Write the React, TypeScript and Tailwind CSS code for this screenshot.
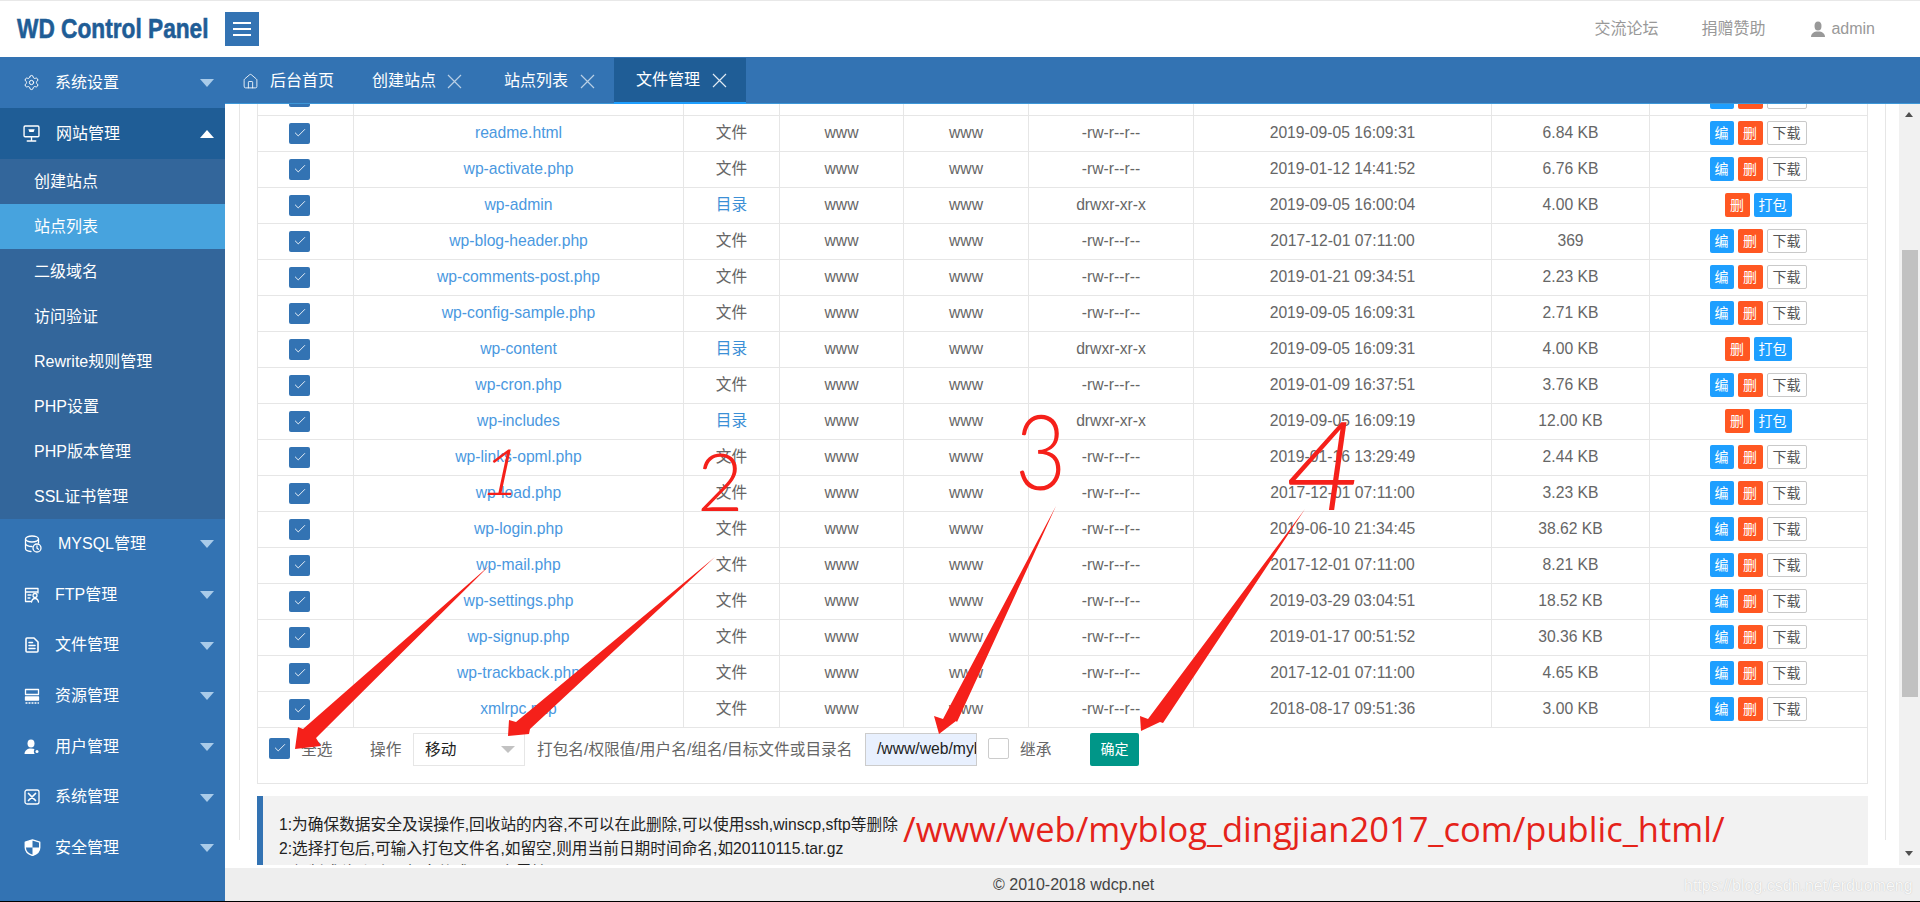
import type { ReactNode } from "react";
import { Settings, Home, Check } from "lucide-react";

const FILES: [string, "f" | "d", string, string, string][] = [
    ["readme.html", "f", "-rw-r--r--", "2019-09-05 16:09:31", "6.84 KB"],
    ["wp-activate.php", "f", "-rw-r--r--", "2019-01-12 14:41:52", "6.76 KB"],
    ["wp-admin", "d", "drwxr-xr-x", "2019-09-05 16:00:04", "4.00 KB"],
    ["wp-blog-header.php", "f", "-rw-r--r--", "2017-12-01 07:11:00", "369"],
    ["wp-comments-post.php", "f", "-rw-r--r--", "2019-01-21 09:34:51", "2.23 KB"],
    ["wp-config-sample.php", "f", "-rw-r--r--", "2019-09-05 16:09:31", "2.71 KB"],
    ["wp-content", "d", "drwxr-xr-x", "2019-09-05 16:09:31", "4.00 KB"],
    ["wp-cron.php", "f", "-rw-r--r--", "2019-01-09 16:37:51", "3.76 KB"],
    ["wp-includes", "d", "drwxr-xr-x", "2019-09-05 16:09:19", "12.00 KB"],
    ["wp-links-opml.php", "f", "-rw-r--r--", "2019-01-16 13:29:49", "2.44 KB"],
    ["wp-load.php", "f", "-rw-r--r--", "2017-12-01 07:11:00", "3.23 KB"],
    ["wp-login.php", "f", "-rw-r--r--", "2019-06-10 21:34:45", "38.62 KB"],
    ["wp-mail.php", "f", "-rw-r--r--", "2017-12-01 07:11:00", "8.21 KB"],
    ["wp-settings.php", "f", "-rw-r--r--", "2019-03-29 03:04:51", "18.52 KB"],
    ["wp-signup.php", "f", "-rw-r--r--", "2019-01-17 00:51:52", "30.36 KB"],
    ["wp-trackback.php", "f", "-rw-r--r--", "2017-12-01 07:11:00", "4.65 KB"],
    ["xmlrpc.php", "f", "-rw-r--r--", "2018-08-17 09:51:36", "3.00 KB"],
];

const SUB_MENU = ["创建站点", "站点列表", "二级域名", "访问验证", "Rewrite规则管理", "PHP设置", "PHP版本管理", "SSL证书管理"];

// Sidebar glyphs, 16 box, white strokes
function Glyph({ children, size = 16, box = "0 0 16 16" }: { children: ReactNode; size?: number; box?: string }) {
    return (
        <svg width={size} height={size} viewBox={box} fill="none" stroke="currentColor" strokeWidth="1.3" strokeLinecap="round" strokeLinejoin="round" className="shrink-0">
            {children}
        </svg>
    );
}

const IconMonitor = (
    <Glyph size={17}>
        <rect x="1" y="1" width="14" height="10" rx="1" />
        <path d="M5 4h6l-1 2.500H6z" fill="currentColor" stroke="none" />
        <path d="M8 11v3M4 15h8" />
    </Glyph>
);

const IconDatabase = (
    <Glyph size={18} box="0 0 18 18">
        <ellipse cx="8" cy="4" rx="6.500" ry="3" />
        <path d="M1.500 4v9.500c0 1.600 2.500 2.800 5.500 3M14.500 4v4M1.500 8.500c0 1.600 3 3 6.500 3" />
        <circle cx="13" cy="13" r="4" />
        <path d="M13 11v2.200l1.500 1" />
    </Glyph>
);

const IconFtp = (
    <Glyph>
        <path d="M14 6V1.500H1.500v13H6.500M1.500 5h12.500M4 8h3M4 11h2" />
        <circle cx="11" cy="8.500" r="2" />
        <path d="M7.500 15c.5-2.500 2-3.500 3.500-3.500s3 1 3.500 3.500" />
    </Glyph>
);

const IconFile = (
    <Glyph>
        <path d="M3 1h7l4 4v9a1 1 0 0 1-1 1H3a1 1 0 0 1-1-1V2a1 1 0 0 1 1-1z" strokeWidth="1.600" />
        <path d="M5 5.500h3.500M5 8.500h6M5 11.500h6" strokeWidth="1.500" />
    </Glyph>
);

const IconServer = (
    <Glyph>
        <rect x="1.500" y="1.500" width="13" height="5" />
        <rect x="1.500" y="9" width="13" height="3" fill="currentColor" />
        <path d="M2 15h1M5 15h1M8 15h1M11 15h1M14 15h.5" />
    </Glyph>
);

const IconUser = (
    <Glyph>
        <ellipse cx="7" cy="4.500" rx="3.500" ry="4" fill="currentColor" stroke="none" />
        <path d="M.5 15c0-3.500 3-5.500 6.500-5.500s5 1 5 2.500v3z" fill="currentColor" stroke="none" />
        <circle cx="13" cy="12.500" r="2.500" fill="#3373b3" stroke="#3373b3" />
        <circle cx="13" cy="12.500" r="1.500" fill="currentColor" stroke="none" />
    </Glyph>
);

const IconTools = (
    <Glyph>
        <rect x="1" y="1" width="14" height="14" rx="2" />
        <path d="M4.500 4.500l7 7M11.500 4.500l-7 7" strokeWidth="1.700" />
    </Glyph>
);

const IconShield = (
    <Glyph size={17}>
        <path d="M8 .8L14.800 3v5c0 3.800-2.800 6.200-6.800 7.500C4 14.200 1.200 11.800 1.200 8V3z" />
        <path d="M8 .8L1.200 3v5H8zM8 8h6.800c0 3.800-2.800 6.200-6.800 7.500z" fill="currentColor" stroke="none" />
    </Glyph>
);

const LOWER_MENU = [
    { label: "MYSQL管理", icon: IconDatabase, labelClass: "ml-[16px]" },
    { label: "FTP管理", icon: IconFtp, labelClass: "ml-[15px]" },
    { label: "文件管理", icon: IconFile, labelClass: "ml-[15px]" },
    { label: "资源管理", icon: IconServer, labelClass: "ml-[15px]" },
    { label: "用户管理", icon: IconUser, labelClass: "ml-[15px]" },
    { label: "系统管理", icon: IconTools, labelClass: "ml-[15px]" },
    { label: "安全管理", icon: IconShield, labelClass: "ml-[14px]" },
];

function Caret({ up }: { up?: boolean }) {
    return (
        <svg width="14" height="8" viewBox="0 0 14 8" className="absolute left-[200px] top-1/2 -translate-y-1/2">
            <path d={up ? "M7 0L14 8H0Z" : "M0 0H14L7 8Z"} fill={up ? "#ffffff" : "#a9cbe9"} />
        </svg>
    );
}

function TabX({ light }: { light?: boolean }) {
    return (
        <svg width="15" height="15" viewBox="0 0 15 15" stroke={light ? "#dfe9f3" : "#b9cfe5"} strokeWidth="1.200" className="shrink-0">
            <path d="M1 1l13 13M14 1L1 14" />
        </svg>
    );
}

function Box({ checked }: { checked?: boolean }) {
    return checked ? (
        <span className="flex h-[21px] w-[21px] items-center justify-center rounded-[2px] bg-[#3373b3]">
            <Check size={14} strokeWidth={1.5} className="text-white" />
        </span>
    ) : (
        <span className="block h-[21px] w-[21px] rounded-[2px] border border-[#cccccc] bg-white" />
    );
}

function Btn({ kind, children }: { kind: "blue" | "red" | "plain"; children: string }) {
    const tone =
        kind === "blue"
            ? "bg-[#1e9fff] text-white"
            : kind === "red"
              ? "min-w-[25px] bg-[#ff5722] text-white"
              : "border border-[#c9c9c9] bg-white text-[#555555]";
    return <span className={"inline-flex h-[24px] items-center justify-center rounded-[2px] px-[5px] text-[14px] " + tone}>{children}</span>;
}

function FileActions({ type }: { type: "f" | "d" }) {
    return (
        <div className="flex items-center justify-center gap-[4px] pr-[1px]">
            {type === "f" ? (
                <>
                    <Btn kind="blue">编</Btn>
                    <Btn kind="red">删</Btn>
                    <Btn kind="plain">下载</Btn>
                </>
            ) : (
                <>
                    <Btn kind="red">删</Btn>
                    <Btn kind="blue">打包</Btn>
                </>
            )}
        </div>
    );
}

function FileRow({ name, type, perm, date, size }: { name: string; type: "f" | "d"; perm: string; date: string; size: string }) {
    return (
        <tr className="h-[36px] border-b border-[#e6e6e6] text-center text-[#666666]">
            <td className="w-[96px] border-l border-[#e6e6e6]">
                <span className="ml-[31px] block w-[21px]">
                    <Box checked />
                </span>
            </td>
            <td className="w-[330px] border-l border-[#e6e6e6] text-[#4a98e0]">{name}</td>
            <td className={"w-[96px] border-l border-[#e6e6e6] " + (type === "d" ? "text-[#3b8fd6]" : "")}>{type === "d" ? "目录" : "文件"}</td>
            <td className="w-[124px] border-l border-[#e6e6e6]">www</td>
            <td className="w-[125px] border-l border-[#e6e6e6]">www</td>
            <td className="w-[165px] border-l border-[#e6e6e6]">{perm}</td>
            <td className="w-[298px] border-l border-[#e6e6e6]">{date}</td>
            <td className="w-[158px] border-l border-[#e6e6e6]">{size}</td>
            <td className="border-x border-[#e6e6e6]">
                <FileActions type={type} />
            </td>
        </tr>
    );
}

export default function App() {
    return (
        <div className="relative flex h-[902px] flex-col overflow-hidden border-y border-t-[#e8e8e8] border-b-black bg-white font-['Liberation_Sans','Noto_Sans_CJK_SC',sans-serif] text-[16px]">
            {/* Top bar */}
            <header className="flex h-[56px] shrink-0 items-center bg-white">
                <div className="w-[225px] pl-[17px]">
                    <span className="inline-block origin-left scale-x-[0.81] whitespace-nowrap text-[28px] font-bold text-[#1f5d96] [-webkit-text-stroke:0.6px_#1f5d96]">
                        WD Control Panel
                    </span>
                </div>
                <button className="flex h-[34px] w-[34px] flex-col items-center justify-center gap-[4px] bg-[#3373b3]">
                    <span className="h-[2px] w-[18px] bg-white" />
                    <span className="h-[2px] w-[18px] bg-white" />
                    <span className="h-[2px] w-[18px] bg-white" />
                </button>
                <nav className="ml-auto flex items-center pr-[45px] text-[#999999]">
                    <span>交流论坛</span>
                    <span className="ml-[43px]">捐赠赞助</span>
                    <svg width="16" height="17" viewBox="0 0 16 17" fill="#999999" className="ml-[45px]">
                        <ellipse cx="8" cy="5" rx="3.500" ry="4.500" />
                        <path d="M1 16c0-3.500 3-5 5-5.500h4c2 .5 5 2 5 5.500z" />
                    </svg>
                    <span className="ml-[5px]">admin</span>
                </nav>
            </header>

            <div className="flex min-h-0 flex-1">
                {/* Sidebar */}
                <aside className="w-[225px] shrink-0 bg-[#3373b3]">
                    <div className="relative flex h-[51px] items-center pl-[23px] text-white">
                        <Settings size={17} strokeWidth={1.4} className="shrink-0" />
                        <span className="ml-[15px]">系统设置</span>
                        <Caret />
                    </div>
                    <div className="relative flex h-[51px] items-center bg-[#1f5d96] pl-[23px] text-white">
                        {IconMonitor}
                        <span className="ml-[16px]">网站管理</span>
                        <Caret up />
                    </div>
                    {SUB_MENU.map((item) => (
                        <div
                            key={item}
                            className={"flex h-[45px] items-center pl-[34px] text-white " + (item === "站点列表" ? "bg-[#47a3de]" : "bg-[#33669b]")}
                        >
                            {item}
                        </div>
                    ))}
                    {LOWER_MENU.map((item) => (
                        <div key={item.label} className="relative flex h-[50.7px] items-center pb-[1px] pl-[24px] text-white">
                            {item.icon}
                            <span className={item.labelClass}>{item.label}</span>
                            <Caret />
                        </div>
                    ))}
                </aside>

                <main className="flex min-w-0 flex-1 flex-col">
                    {/* Tabs */}
                    <div className="flex h-[47px] shrink-0 items-stretch border-b border-[#3d97d8] bg-[#3373b3] pt-[2px] text-white">
                        <div className="flex items-center pl-[17px] pr-[38px]">
                            <Home size={17} strokeWidth={1.2} />
                            <span className="ml-[11px]">后台首页</span>
                        </div>
                        <div className="flex items-center gap-[11px] pr-[42px]">
                            <span>创建站点</span>
                            <TabX />
                        </div>
                        <div className="flex items-center gap-[12px] pr-[19px]">
                            <span>站点列表</span>
                            <TabX />
                        </div>
                        <div className="mb-[-1px] mt-[-1px] flex w-[132px] items-center gap-[12px] border-b-2 border-[#1e9fff] bg-[#1f5d96] pl-[22px]">
                            <span>文件管理</span>
                            <TabX light />
                        </div>
                    </div>

                    <div className="flex min-h-0 flex-1">
                        <div className="min-w-0 flex-1 overflow-hidden pl-[14px] pr-[13px] text-[15.7px]">
                            <div className="h-full border-x border-[#e6e6e6] px-[17px]">
                                <table className="mt-[-25px] w-[1611px] table-fixed border-collapse">
                                    <tbody>
                                        <tr className="h-[36px] border-b border-[#e6e6e6]">
                                            <td className="w-[96px] border-l border-[#e6e6e6]">
                                                <span className="ml-[31px] block w-[21px]">
                                                    <Box checked />
                                                </span>
                                            </td>
                                            <td className="w-[330px] border-l border-[#e6e6e6]" />
                                            <td className="w-[96px] border-l border-[#e6e6e6]" />
                                            <td className="w-[124px] border-l border-[#e6e6e6]" />
                                            <td className="w-[125px] border-l border-[#e6e6e6]" />
                                            <td className="w-[165px] border-l border-[#e6e6e6]" />
                                            <td className="w-[298px] border-l border-[#e6e6e6]" />
                                            <td className="w-[158px] border-l border-[#e6e6e6]" />
                                            <td className="border-x border-[#e6e6e6]">
                                                <FileActions type="f" />
                                            </td>
                                        </tr>
                                        {FILES.map((f) => (
                                            <FileRow key={f[0]} name={f[0]} type={f[1]} perm={f[2]} date={f[3]} size={f[4]} />
                                        ))}
                                    </tbody>
                                </table>

                                {/* Batch actions */}
                                <div className="flex h-[56px] w-[1611px] items-start border-x border-b border-[#e6e6e6] pl-[11px] pt-[5px] text-[#666666]">
                                    <span className="mt-[5px]">
                                        <Box checked />
                                    </span>
                                    <span className="ml-[11px] mt-[5px] w-[32px]">全选</span>
                                    <span className="ml-[37px] mt-[5px] w-[32px]">操作</span>
                                    <div className="relative ml-[11px] flex h-[33px] w-[112px] items-center border border-[#e6e6e6] pl-[11px] pt-[2px] text-[#222222]">
                                        移动
                                        <span className="absolute left-[87px] top-[12px] h-0 w-0 border-x-[7px] border-t-[7px] border-x-transparent border-t-[#c2c2c2]" />
                                    </div>
                                    <span className="ml-[12px] mt-[5px] w-[316px] whitespace-nowrap">打包名/权限值/用户名/组名/目标文件或目录名</span>
                                    <div className="ml-[12px] flex h-[33px] w-[112px] items-center overflow-hidden whitespace-nowrap border border-[#cccccc] bg-[#e8f0fe] pl-[11px] text-[#222222]">
                                        /www/web/myblog_dingjian2017_com/public_html/
                                    </div>
                                    <span className="ml-[11px] mt-[5px]">
                                        <Box />
                                    </span>
                                    <span className="ml-[11px] mt-[5px] w-[32px]">继承</span>
                                    <button className="ml-[38px] h-[33px] w-[49px] rounded-[2px] bg-[#009688] text-[14px] text-white">确定</button>
                                </div>

                                {/* Notes */}
                                <div className="mt-[12px] h-[72px] w-[1611px] border-l-[6px] border-[#3373b3] bg-[#f2f2f2] pl-[16px] pt-[17px] leading-[24px] text-[#222222]">
                                    <p>1:为确保数据安全及误操作,回收站的内容,不可以在此删除,可以使用ssh,winscp,sftp等删除</p>
                                    <p>2:选择打包后,可输入打包文件名,如留空,则用当前日期时间命名,如20110115.tar.gz</p>
                                    <p>3:复制或移动时,目标文件或目录名需填写</p>
                                </div>
                            </div>
                        </div>

                        {/* Scrollbar */}
                        <div className="relative w-[21px] shrink-0 bg-[#f1f1f1]">
                            <span className="absolute left-[6px] top-[8px] h-0 w-0 border-x-[4px] border-b-[5px] border-x-transparent border-b-[#505050]" />
                            <span className="absolute left-[3px] top-[146px] h-[447px] w-[16px] bg-[#c1c1c1]" />
                            <span className="absolute bottom-[9px] left-[6px] h-0 w-0 border-x-[4px] border-t-[5px] border-x-transparent border-t-[#505050]" />
                        </div>
                    </div>

                    <footer className="relative flex h-[36px] shrink-0 items-center border-t-[3px] border-white bg-[#eeeeee] pl-[768px] text-[#444444]">
                        © 2010-2018 wdcp.net
                        <span className="absolute left-[1459px] top-[6px] whitespace-nowrap text-[#f8f8f8] [text-shadow:0_0_1px_#b8b8b8]">
                            https://blog.csdn.net/erduomeng
                        </span>
                    </footer>
                </main>
            </div>

            {/* Red annotations drawn over the screenshot */}
            <div className="pointer-events-none absolute inset-0 top-[-1px]">
                <svg width="1920" height="902" viewBox="0 0 1920 902" className="absolute left-0 top-0" fill="#f5201a">
                    <polygon points="490,565 316,738 321,746 295,749 298,727 303,729" />
                    <polygon points="715,557 530,729 529,734 508,736 509,720 516,722" />
                    <polygon points="1056,506 957,722 956,721 939,734 934,716 943,719" />
                    <polygon points="1305,509 1163,723 1160,722 1141,731 1140,716 1148,719" />
                </svg>
                <span className="absolute left-[903px] top-[804px] whitespace-nowrap font-['Open_Sans',sans-serif] text-[34.5px] leading-[50px] text-[#e5231a]">
                    /www/web/myblog_dingjian2017_com/public_html/
                </span>
                <span className="absolute left-[484px] top-[436px] skew-x-[-12deg] font-['Lato',sans-serif] text-[64px] font-light leading-[70px] text-[#f5201a]">1</span>
                <span className="absolute left-[697px] top-[430px] font-['Lato',sans-serif] text-[80px] font-light leading-[100px] text-[#f5201a]">2</span>
                <span className="absolute left-[1015px] top-[390px] origin-left scale-x-[0.85] font-['Lato',sans-serif] text-[104px] font-light leading-[120px] text-[#f5201a]">3</span>
                <span className="absolute left-[1289px] top-[397px] skew-x-[-8deg] font-['Lato',sans-serif] text-[124px] font-light leading-[130px] text-[#f5201a]">4</span>
            </div>
        </div>
    );
}
